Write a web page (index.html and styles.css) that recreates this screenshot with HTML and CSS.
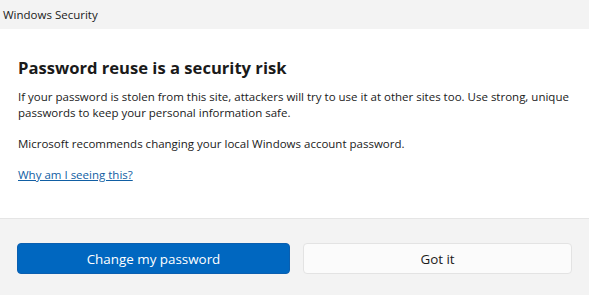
FILE: index.html
```html
<!DOCTYPE html>
<html lang="en">
<head>
<meta charset="utf-8">
<title>Windows Security</title>
<link rel="stylesheet" href="styles.css">
</head>
<body>
<div class="window">
  <div class="titlebar">Windows Security</div>
  <div class="content">
    <h1 class="heading">Password reuse is a security risk</h1>
    <p class="text text-first">If your password is stolen from this site, attackers will try to use it at other sites too. Use strong, unique passwords to keep your personal information safe.</p>
    <p class="text">Microsoft recommends changing your local Windows account password.</p>
    <a class="link" href="#">Why am I seeing this?</a>
  </div>
  <div class="footer">
    <button class="btn btn-primary">Change my password</button>
    <button class="btn btn-secondary">Got it</button>
  </div>
</div>
</body>
</html>
```

FILE: styles.css
```css
html, body {
  margin: 0;
  padding: 0;
}
body {
  font-family: "Open Sans", "Noto Sans", sans-serif;
  color: #1a1a1a;
  background: #f3f3f3;
}
.window {
  width: 589px;
  height: 295px;
  display: flex;
  flex-direction: column;
}
.titlebar {
  height: 29px;
  box-sizing: border-box;
  padding: 7px 0 0 3px;
  font-size: 11.5px;
  line-height: 16px;
  background: #f3f3f3;
  color: #1a1a1a;
}
.content {
  background: #ffffff;
  height: 189px;
  box-sizing: border-box;
  padding: 27px 18px 0 18px;
}
.heading {
  margin: 0 0 9px 0;
  font-size: 16.6px;
  line-height: 24px;
  font-weight: 700;
  color: #1a1a1a;
}
.text {
  margin: 0 0 10px 0;
  font-size: 11.5px;
  line-height: 16px;
}
.text-first {
  margin-bottom: 15px;
}
.link {
  font-size: 11.5px;
  line-height: 16px;
  color: #115ea3;
  text-decoration: underline;
}
.footer {
  flex: 1;
  border-top: 1px solid #e5e5e5;
  background: #f3f3f3;
  display: flex;
  gap: 13px;
  padding: 24px 17px 0 17px;
}
.btn {
  height: 31px;
  border-radius: 4px;
  font-family: inherit;
  font-size: 13.4px;
  cursor: pointer;
}
.btn-primary {
  width: 273px;
  background: #0067c0;
  color: #ffffff;
  border: 1px solid #0a5fb0;
}
.btn-secondary {
  width: 269px;
  background: #fbfbfb;
  color: #1a1a1a;
  border: 1px solid #e3e3e3;
}
```
